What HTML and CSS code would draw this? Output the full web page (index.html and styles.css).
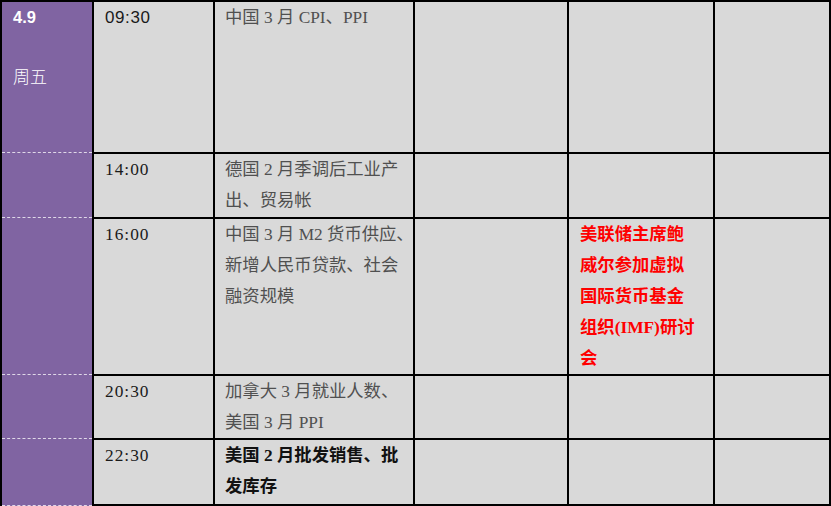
FILE: index.html
```html
<!DOCTYPE html>
<html lang="zh-CN">
<head>
<meta charset="utf-8">
<title>财经日历</title>
<link rel="stylesheet" href="styles.css">
</head>
<body>
<div class="sheet">
  <div class="day first"><div class="date">4.9</div><div class="week">周五</div></div>
  <div class="cell time sans">09:30</div>
  <div class="cell event">中国 3 月 CPI、PPI</div>
  <div class="cell"></div>
  <div class="cell"></div>
  <div class="cell"></div>

  <div class="day"></div>
  <div class="cell time">14:00</div>
  <div class="cell event">德国 2 月季调后工业产<br>出、贸易帐</div>
  <div class="cell"></div>
  <div class="cell"></div>
  <div class="cell"></div>

  <div class="day"></div>
  <div class="cell time">16:00</div>
  <div class="cell event">中国 3 月 M2 货币供应、<br>新增人民币贷款、社会<br>融资规模</div>
  <div class="cell"></div>
  <div class="cell note">美联储主席鲍<br>威尔参加虚拟<br>国际货币基金<br>组织(IMF)研讨<br>会</div>
  <div class="cell"></div>

  <div class="day"></div>
  <div class="cell time">20:30</div>
  <div class="cell event">加拿大 3 月就业人数、<br>美国 3 月 PPI</div>
  <div class="cell"></div>
  <div class="cell"></div>
  <div class="cell"></div>

  <div class="day last"></div>
  <div class="cell time">22:30</div>
  <div class="cell event strong">美国 2 月批发销售、批<br>发库存</div>
  <div class="cell"></div>
  <div class="cell"></div>
  <div class="cell"></div>
</div>
</body>
</html>
```
FILE: styles.css
```css
html, body {
  margin: 0;
  padding: 0;
  background: #ffffff;
}

.sheet {
  display: grid;
  grid-template-columns: 90px 119px 198px 152px 144px 114px;
  grid-template-rows: 150px 63px 155px 62px 64px;
  gap: 2px;
  width: 827px;
  border: 2px solid #000;
  background: #000;
  font-family: "Liberation Serif", "Noto Sans CJK SC", serif;
  font-size: 17.33px;
  line-height: 31px;
}

.day {
  background: #8064a2;
  color: #ffffff;
  padding: 0 11px;
  margin-top: -2px;
  border-top: 1px dashed rgba(255, 255, 255, 0.75);
}

.day.first {
  margin-top: 0;
  border-top: none;
}

.day.last {
  margin-bottom: -2px;
  border-bottom: 1px dashed rgba(255, 255, 255, 0.75);
}

.date {
  font-family: "Liberation Sans", Arial, sans-serif;
  font-weight: bold;
  font-size: 16.5px;
}

.week {
  margin-top: 27px;
  font-family: "Noto Sans CJK SC", sans-serif;
  font-weight: 300;
  font-size: 17px;
}

.cell {
  background: #d9d9d9;
  padding: 0 10px;
  color: #333;
}

.time {
  padding-left: 11px;
  letter-spacing: 1px;
  color: #1a1a1a;
}

.time.sans {
  font-family: "Liberation Sans", Arial, sans-serif;
  letter-spacing: 0.6px;
  font-size: 17px;
}

.event {
  color: #505050;
  white-space: nowrap;
}

.event.strong {
  color: #111;
  font-weight: bold;
}

.note {
  padding-left: 11px;
  color: #ff0000;
  font-weight: bold;
  white-space: nowrap;
}
```
